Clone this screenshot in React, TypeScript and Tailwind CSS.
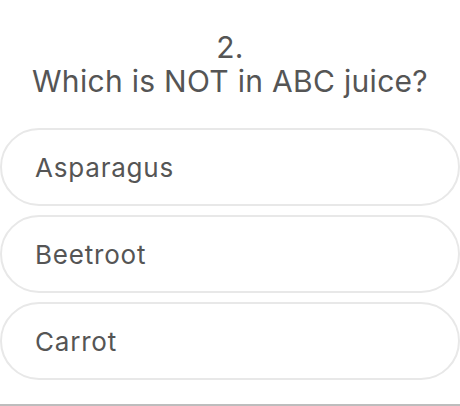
export default function App() {
  const options = ["Asparagus", "Beetroot", "Carrot"];
  return (
    <div
      className="w-[460px] h-[406px] bg-white flex flex-col overflow-hidden"
      style={{ fontFamily: "Inter, 'Noto Sans', sans-serif" }}
    >
      <div className="pt-[30px] text-center text-[30px] leading-[34px] text-[#555555] tracking-[0.3px]">
        <div>2.</div>
        <div>Which is NOT in ABC juice?</div>
      </div>
      <div className="mt-[30px] flex flex-col gap-[9px]">
        {options.map((o) => (
          <div
            key={o}
            className="w-[460px] h-[78px] rounded-full border-[2.5px] border-[#e8e8e8] flex items-center pl-[33px] text-[26px] tracking-[0.8px] text-[#555555]"
          >
            {o}
          </div>
        ))}
      </div>
      <div className="flex-1" />
      <div className="h-[2px] bg-[#bdbdbd]" />
    </div>
  );
}
